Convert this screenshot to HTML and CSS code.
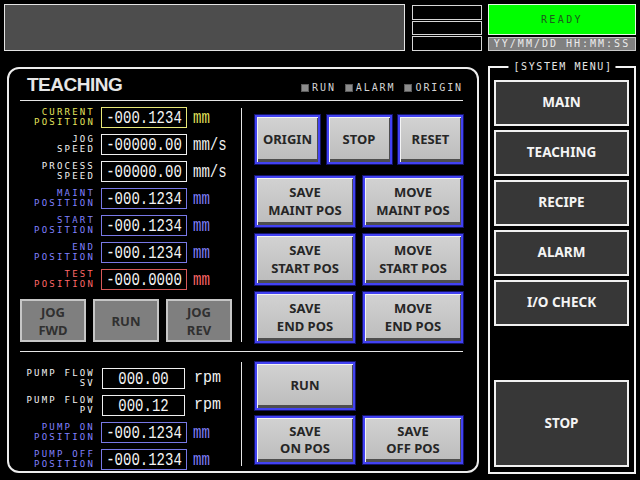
FILE: index.html
```html
<!DOCTYPE html>
<html>
<head>
<meta charset="utf-8">
<link rel="stylesheet" href="styles.css">
</head>
<body>
<div class="screen">
  <header class="top">
    <div class="msg"></div>
    <div class="lamps"><span></span><span></span><span></span></div>
    <div class="status">
      <div class="ready">READY</div>
      <div class="clock">YY/MM/DD HH:MM:SS</div>
    </div>
  </header>
  <div class="main">
    <section class="panel">
      <div class="panel-head">
        <h1>TEACHING</h1>
        <ul class="legend">
          <li><i></i>RUN</li>
          <li><i></i>ALARM</li>
          <li><i></i>ORIGIN</li>
        </ul>
      </div>
      <div class="upper">
        <div class="fields">
          <div class="field yellow"><span class="lbl">CURRENT<br>POSITION</span><span class="val"><b>-000.1234</b></span><span class="unit">mm</span></div>
          <div class="field white"><span class="lbl">JOG<br>SPEED</span><span class="val"><b>-00000.00</b></span><span class="unit">mm/s</span></div>
          <div class="field white"><span class="lbl">PROCESS<br>SPEED</span><span class="val"><b>-00000.00</b></span><span class="unit">mm/s</span></div>
          <div class="field blue"><span class="lbl">MAINT<br>POSITION</span><span class="val"><b>-000.1234</b></span><span class="unit">mm</span></div>
          <div class="field blue"><span class="lbl">START<br>POSITION</span><span class="val"><b>-000.1234</b></span><span class="unit">mm</span></div>
          <div class="field blue"><span class="lbl">END<br>POSITION</span><span class="val"><b>-000.1234</b></span><span class="unit">mm</span></div>
          <div class="field red"><span class="lbl">TEST<br>POSITION</span><span class="val"><b>-000.0000</b></span><span class="unit">mm</span></div>
          <div class="jog">
            <div class="gbtn">JOG<br>FWD</div>
            <div class="gbtn">RUN</div>
            <div class="gbtn">JOG<br>REV</div>
          </div>
        </div>
        <div class="vdiv"></div>
        <div class="actions">
          <div class="row3">
            <div class="bb">ORIGIN</div>
            <div class="bb">STOP</div>
            <div class="bb">RESET</div>
          </div>
          <div class="row2">
            <div class="bb">SAVE<br>MAINT POS</div>
            <div class="bb">MOVE<br>MAINT POS</div>
          </div>
          <div class="row2">
            <div class="bb">SAVE<br>START POS</div>
            <div class="bb">MOVE<br>START POS</div>
          </div>
          <div class="row2">
            <div class="bb">SAVE<br>END POS</div>
            <div class="bb">MOVE<br>END POS</div>
          </div>
        </div>
      </div>
      <div class="lower">
        <div class="fields">
          <div class="field white"><span class="lbl">PUMP FLOW<br>SV</span><span class="val narrow"><b>000.00</b></span><span class="unit rpm">rpm</span></div>
          <div class="field white"><span class="lbl">PUMP FLOW<br>PV</span><span class="val narrow"><b>000.12</b></span><span class="unit rpm">rpm</span></div>
          <div class="field blue"><span class="lbl">PUMP ON<br>POSITION</span><span class="val"><b>-000.1234</b></span><span class="unit">mm</span></div>
          <div class="field blue"><span class="lbl">PUMP OFF<br>POSITION</span><span class="val"><b>-000.1234</b></span><span class="unit">mm</span></div>
        </div>
        <div class="vdiv"></div>
        <div class="actions">
          <div class="row2 low">
            <div class="bb">RUN</div>
          </div>
          <div class="row2 low">
            <div class="bb">SAVE<br>ON POS</div>
            <div class="bb">SAVE<br>OFF POS</div>
          </div>
        </div>
      </div>
    </section>
    <nav class="menu">
      <div class="menu-title">[SYSTEM MENU]</div>
      <div class="mbtn">MAIN</div>
      <div class="mbtn">TEACHING</div>
      <div class="mbtn">RECIPE</div>
      <div class="mbtn">ALARM</div>
      <div class="mbtn">I/O CHECK</div>
      <div class="mbtn stop">STOP</div>
    </nav>
  </div>
</div>
</body>
</html>
```

FILE: styles.css
```css
body {
  margin: 0;
  background: #000;
}

.screen {
  width: 640px;
  height: 480px;
  box-sizing: border-box;
  padding: 4px 4px 0;
  display: flex;
  flex-direction: column;
  font-family: "Liberation Sans", Arial, sans-serif;
  background: #000;
}

/* ---------- top bar ---------- */
.top {
  display: flex;
  height: 47px;
}

.msg {
  width: 401px;
  box-sizing: border-box;
  border: 1px solid #e4e4e4;
  background: #4d4d4d;
}

.lamps {
  margin-left: 7px;
  width: 70px;
  display: flex;
  flex-direction: column;
  gap: 1px;
  padding-top: 1px;
}

.lamps span {
  flex: 1;
  border: 1px solid #d6d6d6;
  background: #000;
}

.status {
  margin-left: 6px;
  width: 148px;
  display: flex;
  flex-direction: column;
  gap: 2px;
}

.ready {
  height: 31px;
  box-sizing: border-box;
  background: #00ff00;
  border: 1px solid #dfffdf;
  color: #1d5a1d;
  display: flex;
  align-items: center;
  justify-content: center;
  font: 10px/1 "DejaVu Sans Mono", monospace;
  letter-spacing: 2.4px;
}

.clock {
  flex: 1;
  box-sizing: border-box;
  background: #808080;
  border: 1px solid #c8c8c8;
  color: #ececec;
  display: flex;
  align-items: center;
  justify-content: center;
  font: 10px/1 "DejaVu Sans Mono", monospace;
  letter-spacing: 2px;
}

/* ---------- main ---------- */
.main {
  display: flex;
  align-items: flex-start;
  margin-top: 15px;
}

.panel {
  margin-left: 3px;
  margin-top: 1px;
  width: 472px;
  height: 406px;
  box-sizing: border-box;
  border: 2px solid #ececec;
  border-radius: 12px;
  padding: 0 14px 0 11px;
  display: flex;
  flex-direction: column;
}

.panel-head {
  height: 31px;
  border-bottom: 1px solid #e6e6e6;
  display: flex;
  align-items: center;
  justify-content: space-between;
}

.panel-head h1 {
  margin: 0 0 0 7px;
  font: bold 19px/1 "Liberation Sans", Arial, sans-serif;
  letter-spacing: -0.5px;
  color: #e6e6e6;
}

.legend {
  list-style: none;
  margin: 7px 0 0;
  padding: 0;
  display: flex;
  gap: 9px;
  font: 10px/1 "DejaVu Sans Mono", monospace;
  letter-spacing: 1.9px;
  color: #d4d4d4;
}

.legend li {
  display: flex;
  align-items: center;
}

.legend i {
  width: 6px;
  height: 6px;
  border: 1px solid #5c5c5c;
  background: #8c8c8c;
  margin-right: 3px;
}

/* ---------- field rows ---------- */
.upper {
  display: flex;
  height: 251px;
  box-sizing: border-box;
  border-bottom: 1px solid #e6e6e6;
}

.fields {
  width: 213px;
  padding-top: 6px;
  display: flex;
  flex-direction: column;
  gap: 6px;
}

.field {
  display: flex;
  align-items: center;
  height: 21px;
}

.lbl {
  width: 75px;
  flex: none;
  text-align: right;
  font: 9px/9.5px "DejaVu Sans Mono", monospace;
  letter-spacing: 2.2px;
}

.val {
  margin-left: 6px;
  width: 86px;
  height: 21px;
  flex: none;
  box-sizing: border-box;
  border: 1px solid;
  display: flex;
  align-items: center;
  justify-content: center;
  color: #f4f4f4;
  font: 14px/1 "Liberation Mono", monospace;
}

.val.narrow {
  width: 83px;
  margin-left: 7px;
}

.val b {
  font-weight: normal;
  transform: scaleY(1.3);
}

.unit {
  margin-left: 6px;
  font: 14px/1 "Liberation Mono", monospace;
  transform: scaleY(1.25);
}

.unit.rpm {
  margin-left: 9px;
  font-size: 15px;
  transform: scaleY(1.1);
}

.yellow .lbl, .yellow .unit { color: #e4e45c; }
.yellow .val { border-color: #e8e878; }
.white .lbl, .white .unit { color: #f2f2f2; }
.white .val { border-color: #f0f0f0; }
.blue .lbl, .blue .unit { color: #8080ff; }
.blue .val { border-color: #7878e6; }
.red .lbl, .red .unit { color: #ff6868; }
.red .val { border-color: #d85a5a; }

/* ---------- jog buttons ---------- */
.jog {
  display: flex;
  gap: 7px;
  margin-top: 3px;
}

.gbtn {
  width: 66px;
  height: 43px;
  box-sizing: border-box;
  border: 2px solid #c6c6c6;
  background: #7f7f7f;
  color: #303030;
  display: flex;
  align-items: center;
  justify-content: center;
  text-align: center;
  font: bold 13px/18px "Noto Sans", "Open Sans", sans-serif;
}

/* ---------- dividers ---------- */
.vdiv {
  margin-left: 8px;
  width: 1px;
  flex: none;
  background: #e6e6e6;
  margin-top: 7px;
  height: 234px;
}

.lower .vdiv {
  margin-top: 0;
  height: 104px;
}

/* ---------- action buttons ---------- */
.actions {
  margin-left: 13px;
  width: 208px;
  padding-top: 14px;
  display: flex;
  flex-direction: column;
  gap: 7px;
}

.row3 {
  display: grid;
  grid-template-columns: repeat(3, 1fr);
  gap: 6.5px;
  height: 49px;
  margin-bottom: 5px;
}

.row2 {
  display: grid;
  grid-template-columns: 1fr 1fr;
  gap: 8px;
  height: 51px;
}

.bb {
  box-sizing: border-box;
  border: 2px solid #4242f2;
  box-shadow: 0 0 0 1px #14146c, inset 1px 1px 0 #f4f4f4, inset -1px -3px 0 #4e4e4e;
  background: linear-gradient(#d2d2d2, #bcbcbc);
  color: #262626;
  display: flex;
  align-items: center;
  justify-content: center;
  text-align: center;
  font: bold 13px/17.5px "Noto Sans", "Open Sans", sans-serif;
}

.lower {
  display: flex;
  padding-top: 10px;
}

.lower .actions {
  padding-top: 0;
  gap: 6px;
}

.row2.low {
  height: 48px;
}

/* ---------- system menu ---------- */
.menu {
  position: relative;
  margin-left: 9px;
  width: 148px;
  height: 408px;
  box-sizing: border-box;
  border: 2px solid #f2f2f2;
  padding: 12px 5px 5px 4px;
  display: flex;
  flex-direction: column;
  gap: 4px;
}

.menu-title {
  position: absolute;
  top: -7px;
  left: 50%;
  transform: translateX(-50%);
  background: #000;
  padding: 0 3px 0 5px;
  white-space: nowrap;
  color: #e6e6e6;
  font: 10px/12px "DejaVu Sans Mono", monospace;
  letter-spacing: 1.6px;
}

.mbtn {
  height: 46px;
  flex: none;
  box-sizing: border-box;
  border: 2px solid #f0f0f0;
  background: #373737;
  color: #f4f4f4;
  display: flex;
  align-items: center;
  justify-content: center;
  font: bold 13.5px/1 "Noto Sans", "Open Sans", sans-serif;
}

.mbtn.stop {
  margin-top: auto;
  height: 87px;
}
```
